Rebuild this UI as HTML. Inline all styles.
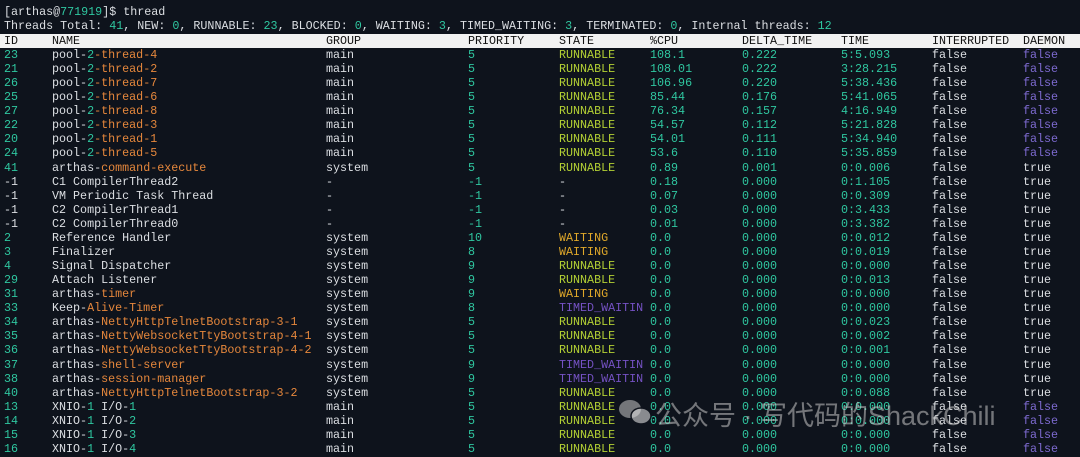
<!DOCTYPE html>
<html><head><meta charset="utf-8"><style>
html,body{margin:0;padding:0;}
body{width:1080px;height:457px;background:#0e131c;overflow:hidden;position:relative;font-family:"Liberation Mono",monospace;font-size:11.7px;color:#dcdfe3;}
.l{position:absolute;left:4px;height:14px;line-height:14px;white-space:pre;}
.c{position:absolute;top:0;}
.t{color:#2fc7a0}.o{color:#e5873c}.r{color:#b3d034}.w{color:#e0a82a}.p{color:#7552c4}.f{color:#7d6ad0}
.hd{position:absolute;left:0;top:34px;width:1080px;height:14px;background:#f2f2f2;}
.hd .l{color:#111;}
.wm{position:absolute;left:655px;top:394px;font-family:"Liberation Sans","Noto Sans CJK SC",sans-serif;font-size:27px;color:rgba(200,200,200,0.55);white-space:nowrap;}
</style></head><body>
<div class="l" style="top:5px">[arthas@<span class="t">771919</span>]$ thread</div>
<div class="l" style="top:19px">Threads Total: <span class="t">41</span>, NEW: <span class="t">0</span>, RUNNABLE: <span class="t">23</span>, BLOCKED: <span class="t">0</span>, WAITING: <span class="t">3</span>, TIMED_WAITING: <span class="t">3</span>, TERMINATED: <span class="t">0</span>, Internal threads: <span class="t">12</span></div>
<div class="hd"><div class="l" style="top:0" id="h"></div></div>
<div id="rows"></div>
<svg style="position:absolute;left:617px;top:397px" width="38" height="30"><ellipse cx="13" cy="12" rx="11" ry="9" fill="rgba(200,200,200,0.55)"/><ellipse cx="24" cy="19" rx="10" ry="8" fill="rgba(220,220,220,0.6)" stroke="#0e131c" stroke-width="1.5"/></svg>
<div class="wm">公众号 · 写代码的ShackChili</div>
<script>
var X=[0,48,322,464,555,646,738,837,928,1019];
function cell(x,h){return '<span class="c" style="left:'+x+'px">'+h+'</span>';}
var hdr=['ID','NAME','GROUP','PRIORITY','STATE','%CPU','DELTA_TIME','TIME','INTERRUPTED','DAEMON'];
document.getElementById('h').innerHTML=hdr.map(function(s,i){return cell(X[i],s)}).join('');
function T(s){return '<span class="t">'+s+'</span>'}
function O(s){return '<span class="o">'+s+'</span>'}
var R=[
['23','pool-'+T(2)+O('-thread-4'),'main','5','RUNNABLE','108.1','0.222','5:5.093','false','false'],
['21','pool-'+T(2)+O('-thread-2'),'main','5','RUNNABLE','108.01','0.222','3:28.215','false','false'],
['26','pool-'+T(2)+O('-thread-7'),'main','5','RUNNABLE','106.96','0.220','5:38.436','false','false'],
['25','pool-'+T(2)+O('-thread-6'),'main','5','RUNNABLE','85.44','0.176','5:41.065','false','false'],
['27','pool-'+T(2)+O('-thread-8'),'main','5','RUNNABLE','76.34','0.157','4:16.949','false','false'],
['22','pool-'+T(2)+O('-thread-3'),'main','5','RUNNABLE','54.57','0.112','5:21.828','false','false'],
['20','pool-'+T(2)+O('-thread-1'),'main','5','RUNNABLE','54.01','0.111','5:34.940','false','false'],
['24','pool-'+T(2)+O('-thread-5'),'main','5','RUNNABLE','53.6','0.110','5:35.859','false','false'],
['41','arthas-'+O('command-execute'),'system','5','RUNNABLE','0.89','0.001','0:0.006','false','true'],
['-1','C1 CompilerThread2','-','-1','-','0.18','0.000','0:1.105','false','true'],
['-1','VM Periodic Task Thread','-','-1','-','0.07','0.000','0:0.309','false','true'],
['-1','C2 CompilerThread1','-','-1','-','0.03','0.000','0:3.433','false','true'],
['-1','C2 CompilerThread0','-','-1','-','0.01','0.000','0:3.382','false','true'],
['2','Reference Handler','system','10','WAITING','0.0','0.000','0:0.012','false','true'],
['3','Finalizer','system','8','WAITING','0.0','0.000','0:0.019','false','true'],
['4','Signal Dispatcher','system','9','RUNNABLE','0.0','0.000','0:0.000','false','true'],
['29','Attach Listener','system','9','RUNNABLE','0.0','0.000','0:0.013','false','true'],
['31','arthas-'+O('timer'),'system','9','WAITING','0.0','0.000','0:0.000','false','true'],
['33','Keep-'+O('Alive-Timer'),'system','8','TIMED_WAITIN','0.0','0.000','0:0.000','false','true'],
['34','arthas-'+O('NettyHttpTelnetBootstrap-3-1'),'system','5','RUNNABLE','0.0','0.000','0:0.023','false','true'],
['35','arthas-'+O('NettyWebsocketTtyBootstrap-4-1'),'system','5','RUNNABLE','0.0','0.000','0:0.002','false','true'],
['36','arthas-'+O('NettyWebsocketTtyBootstrap-4-2'),'system','5','RUNNABLE','0.0','0.000','0:0.001','false','true'],
['37','arthas-'+O('shell-server'),'system','9','TIMED_WAITIN','0.0','0.000','0:0.000','false','true'],
['38','arthas-'+O('session-manager'),'system','9','TIMED_WAITIN','0.0','0.000','0:0.000','false','true'],
['40','arthas-'+O('NettyHttpTelnetBootstrap-3-2'),'system','5','RUNNABLE','0.0','0.000','0:0.088','false','true'],
['13','XNIO-'+T(1)+' I/O-'+T(1),'main','5','RUNNABLE','0.0','0.000','0:0.000','false','false'],
['14','XNIO-'+T(1)+' I/O-'+T(2),'main','5','RUNNABLE','0.0','0.000','0:0.000','false','false'],
['15','XNIO-'+T(1)+' I/O-'+T(3),'main','5','RUNNABLE','0.0','0.000','0:0.000','false','false'],
['16','XNIO-'+T(1)+' I/O-'+T(4),'main','5','RUNNABLE','0.0','0.000','0:0.000','false','false']];
var h='';
R.forEach(function(r,k){
 var top=48+k*14.07;
 var st=r[4]=='RUNNABLE'?'r':r[4]=='WAITING'?'w':r[4]=='-'?'':'p';
 var c=[r[0]=='-1'?r[0]:T(r[0]),r[1],r[2],T(r[3]),'<span class="'+st+'">'+r[4]+'</span>',T(r[5]),T(r[6]),T(r[7]),r[8],r[9]=='false'?'<span class="f">false</span>':'true'];
 h+='<div class="l" style="top:'+top+'px">'+c.map(function(s,i){return cell(X[i],s)}).join('')+'</div>';
});
document.getElementById('rows').innerHTML=h;
</script>
</body></html>
